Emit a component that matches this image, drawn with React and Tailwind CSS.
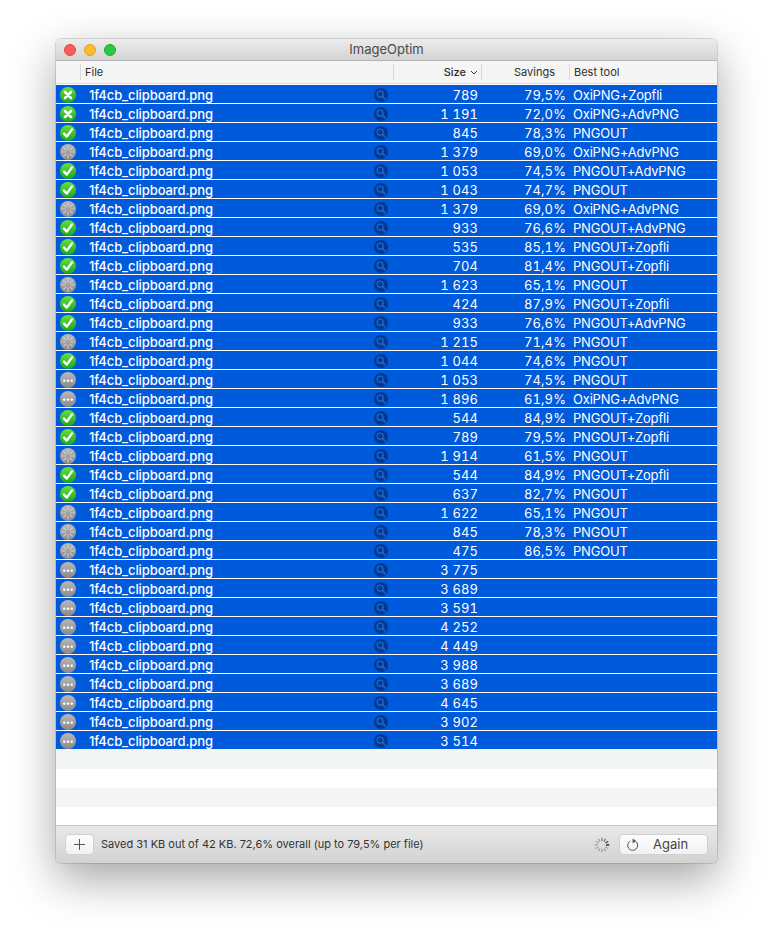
const ROWS = [
  ['x','789','79,5%','OxiPNG+Zopfli'],['x','1 191','72,0%','OxiPNG+AdvPNG'],['c','845','78,3%','PNGOUT'],
  ['s','1 379','69,0%','OxiPNG+AdvPNG'],['c','1 053','74,5%','PNGOUT+AdvPNG'],['c','1 043','74,7%','PNGOUT'],
  ['s','1 379','69,0%','OxiPNG+AdvPNG'],['c','933','76,6%','PNGOUT+AdvPNG'],['c','535','85,1%','PNGOUT+Zopfli'],
  ['c','704','81,4%','PNGOUT+Zopfli'],['s','1 623','65,1%','PNGOUT'],['c','424','87,9%','PNGOUT+Zopfli'],
  ['c','933','76,6%','PNGOUT+AdvPNG'],['s','1 215','71,4%','PNGOUT'],['c','1 044','74,6%','PNGOUT'],
  ['d','1 053','74,5%','PNGOUT'],['d','1 896','61,9%','OxiPNG+AdvPNG'],['c','544','84,9%','PNGOUT+Zopfli'],
  ['c','789','79,5%','PNGOUT+Zopfli'],['s','1 914','61,5%','PNGOUT'],['c','544','84,9%','PNGOUT+Zopfli'],
  ['c','637','82,7%','PNGOUT'],['s','1 622','65,1%','PNGOUT'],['s','845','78,3%','PNGOUT'],['s','475','86,5%','PNGOUT'],
  ['d','3 775','',''],['d','3 689','',''],['d','3 591','',''],['d','4 252','',''],['d','4 449','',''],
  ['d','3 988','',''],['d','3 689','',''],['d','4 645','',''],['d','3 902','',''],['d','3 514','',''],
];

const ANGLES = [0, 45, 90, 135, 180, 225, 270, 315];
const SPOKES = [0, 30, 60, 90, 120, 150, 180, 210, 240, 270, 300, 330];
const SPIN_OPACITY = [0.45, 0.55, 0.75, 0.95, 0.3, 0.28, 0.28, 0.28, 0.28, 0.28, 0.3, 0.35];

function Status({ kind }) {
  const green = kind === 'x' || kind === 'c';
  return (
    <svg width="16" height="16" viewBox="0 0 16 16">
      <defs>
        <linearGradient id="gr" x1="0" y1="0" x2="0" y2="1">
          <stop offset="0" stopColor="#66e03e" /><stop offset="1" stopColor="#18a81c" />
        </linearGradient>
        <linearGradient id="gy" x1="0" y1="0" x2="0" y2="1">
          <stop offset="0" stopColor="#b8b8b8" /><stop offset="1" stopColor="#8a8a8a" />
        </linearGradient>
      </defs>
      <circle cx="8" cy="8" r="8" fill={green ? 'url(#gr)' : 'url(#gy)'} />
      {kind === 'x' && <path d="M5 5l6 6M11 5l-6 6" stroke="#fff" strokeWidth="2.6" strokeLinecap="round" />}
      {kind === 'c' && <path d="M4 8.6l2.8 3L12 4.4" stroke="#fff" strokeWidth="2.4" fill="none" strokeLinecap="round" strokeLinejoin="round" />}
      {kind === 'd' && (
        <g fill="#fff"><rect x="3.2" y="7.6" width="2.2" height="2.2" rx=".6" /><rect x="6.9" y="7.6" width="2.2" height="2.2" rx=".6" /><rect x="10.6" y="7.6" width="2.2" height="2.2" rx=".6" /></g>
      )}
      {kind === 's' && ANGLES.map((a) => (
        <line key={a} x1="8" y1="5.6" x2="8" y2="1.6" transform={`rotate(${a} 8 8)`} stroke="#dcdcdc" strokeWidth="1.2" strokeOpacity=".7" />
      ))}
    </svg>
  );
}

function Magnifier() {
  return (
    <svg width="14" height="14" viewBox="0 0 14 14">
      <circle cx="7" cy="7" r="7" fill="#003a92" />
      <circle cx="6.2" cy="6.2" r="3" fill="none" stroke="#1c66cc" strokeWidth="1.3" />
      <path d="M8.4 8.4l2.6 2.6" stroke="#1c66cc" strokeWidth="1.7" strokeLinecap="round" />
    </svg>
  );
}

function Row({ r }) {
  return (
    <div className="flex h-[18px] mb-px items-center bg-[#005adc] text-white text-[13px] leading-[18px]">
      <div className="w-6 flex justify-center pt-[2px]"><Status kind={r[0]} /></div>
      <div className="w-[313px] flex items-center justify-between pl-[9px] pr-[5px]">
        <span className="font-medium tracking-[-0.1px] pt-px">1f4cb_clipboard.png</span>
        <div className="pt-px"><Magnifier /></div>
      </div>
      <div className="w-[88px] text-right pr-[3px] pt-px tabular-nums tracking-[0.1px]">{r[1]}</div>
      <div className="w-[88px] text-right pr-[3px] pt-px tabular-nums tracking-[0.1px]">{r[2]}</div>
      <div className="pl-1 pt-px whitespace-nowrap tracking-[-0.2px]">{r[3]}</div>
    </div>
  );
}

export default function App() {
  return (
    <div className="w-[773px] h-[936px] bg-white pt-[39px] pl-[56px] overflow-hidden text-[#262626]" style={{ fontFamily: 'Inter, "Liberation Sans", sans-serif' }}>
      <div className="w-[661px] rounded-[5px] overflow-hidden shadow-[0_0_0_1px_rgba(0,0,0,0.12),0_16px_45px_rgba(0,0,0,0.36)]">
        <div className="relative h-[22px] bg-gradient-to-b from-[#ececec] to-[#d4d4d4] border-b border-[#b4b4b4] flex items-center justify-center text-[13px] text-[#4a4a4a]">
          <div className="absolute left-2 top-[5px] flex gap-2">
            <span className="w-3 h-3 rounded-full bg-[#fc5b57] border border-[#e2463f]" />
            <span className="w-3 h-3 rounded-full bg-[#fdbb2f] border border-[#e0a028]" />
            <span className="w-3 h-3 rounded-full bg-[#28c93f] border border-[#1daa2c]" />
          </div>
          ImageOptim
        </div>

        <div className="flex h-[23px] items-center bg-[#f5f5f5] border-b border-[#dcdcdc] text-[11px] text-[#2e2e2e]">
          <div className="w-6 h-4" />
          <div className="w-[313px] h-4 border-l border-[#d8d8d8] pl-1 leading-4">File</div>
          <div className="w-[88px] h-4 border-l border-[#d8d8d8] flex items-center justify-end gap-[4px] pr-[3px]">
            <span className="font-medium">Size</span>
            <svg width="8" height="5" viewBox="0 0 8 5"><path d="M1 1l3 3 3-3" fill="none" stroke="#333" strokeWidth="1" /></svg>
          </div>
          <div className="w-[88px] h-4 border-l border-[#d8d8d8] text-right pr-[14px] leading-4">Savings</div>
          <div className="h-4 border-l border-[#d8d8d8] pl-1 leading-4">Best tool</div>
        </div>

        <div className="bg-white pt-px">
          {ROWS.map((r, i) => <Row key={i} r={r} />)}
          <div className="h-5 bg-[#f3f5f4] -mt-px" />
          <div className="h-[19px] bg-white" />
          <div className="h-[19px] bg-[#f3f5f4]" />
          <div className="h-[18px] bg-white" />
        </div>

        <div className="h-[38px] bg-gradient-to-b from-[#e9e9e9] to-[#d2d2d2] border-t border-[#c4c4c4] flex items-center pl-[9px] pr-[9px] text-[11px] text-[#333]">
          <button className="w-[29px] h-[21px] bg-gradient-to-b from-[#fcfcfc] to-[#f2f2f2] rounded-[4px] border border-[#d0d0d0] flex items-center justify-center">
            <svg width="13" height="13" viewBox="0 0 13 13"><path d="M6.5 1v11M1 6.5h11" stroke="#555" strokeWidth="1" /></svg>
          </button>
          <span className="ml-[7px]">Saved 31 KB out of 42 KB. 72,6% overall (up to 79,5% per file)</span>
          <svg className="ml-auto mr-[9px]" width="16" height="16" viewBox="0 0 16 16">
            {SPOKES.map((a, i) => (
              <line key={a} x1="8" y1="4" x2="8" y2="0.8" transform={`rotate(${a} 8 8)`} stroke="#222" strokeWidth="1.4" strokeOpacity={SPIN_OPACITY[i]} />
            ))}
          </svg>
          <button className="w-[89px] h-[21px] bg-gradient-to-b from-[#fcfcfc] to-[#f2f2f2] rounded-[4px] border border-[#d0d0d0] flex items-center pl-[6px] text-[13px] text-[#444]">
            <svg width="14" height="14" viewBox="0 0 14 14">
              <path d="M9.8 3.4A5 5 0 1 1 4.2 3" fill="none" stroke="#555" strokeWidth="1" />
              <path d="M6.6 0.4l3.6 2.7L6.6 5.4z" fill="#555" />
            </svg>
            <span className="ml-[13px]">Again</span>
          </button>
        </div>
      </div>
    </div>
  );
}
